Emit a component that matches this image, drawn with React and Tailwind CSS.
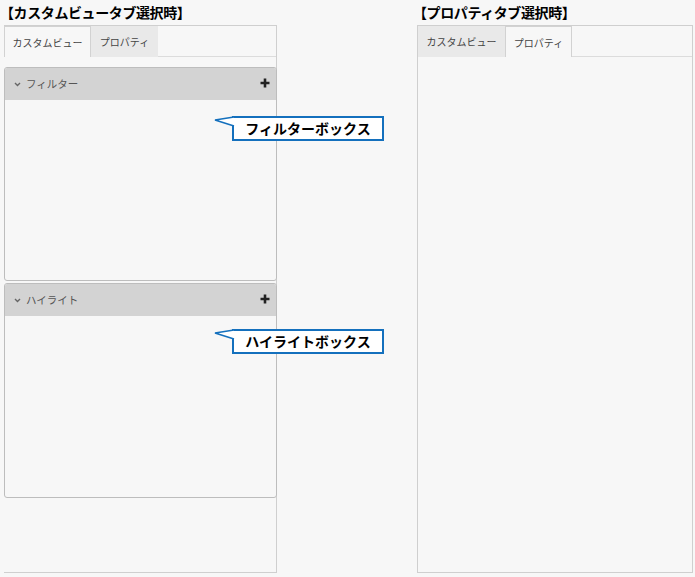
const Tab = ({ label, active, w }) => (
  <div
    className={`${w} h-[31px] flex items-center justify-center text-[10px] text-[#444] ${
      active ? 'bg-[#f7f7f7] border-l border-t border-r border-[#d2d2d2]' : 'bg-[#e9e9e9]'
    }`}
  >
    {label}
  </div>
);

const Box = ({ title, h }) => (
  <div className={`${h} border border-[#bdbdbd] rounded-[3px] bg-[#f7f7f7] flex flex-col overflow-hidden`}>
    <div className="h-[32px] bg-[#d3d3d3] flex items-center pl-[9px] pr-[6px]">
      <svg width="7" height="5" viewBox="0 0 7 5" className="mr-[5px] mt-[1px]">
        <path d="M1 1 L3.5 3.5 L6 1" fill="none" stroke="#666" strokeWidth="1.4" />
      </svg>
      <span className="text-[10.5px] text-[#555]">{title}</span>
      <svg width="10" height="10" viewBox="0 0 10 10" className="ml-auto mb-[2px]">
        <path d="M5 0.5 V9.5 M0.5 5 H9.5" stroke="#222" strokeWidth="2.6" />
      </svg>
    </div>
  </div>
);

const Callout = ({ label, top }) => (
  <div className="absolute left-[214px]" style={{ top }}>
    <div className="relative">
      <div className="absolute left-[18px] top-0 w-[152px] h-[25px] border-2 border-[#1470bd] bg-white flex items-center justify-center text-[14px] font-bold text-black">
        {label}
      </div>
      <svg width="24" height="14" viewBox="0 0 24 14" className="absolute left-0 top-0">
        <polygon points="1,4 20,1 20,10" fill="white" />
        <path d="M20 1 L1 4 L20 10" fill="none" stroke="#1470bd" strokeWidth="1.6" />
      </svg>
    </div>
  </div>
);

const Panel = ({ activeFirst, boxes, w, noLeft }) => (
  <div
    className={`${w} h-[548px] border-t border-r border-b ${noLeft ? '' : 'border-l'} border-[#cfcfcf] flex flex-col`}
  >
    <div className="flex">
      <Tab label="カスタムビュー" active={activeFirst} w="w-[87px]" />
      <Tab label="プロパティ" active={!activeFirst} w="w-[67px]" />
      <div className="flex-1 border-b border-[#dcdcdc]" />
    </div>
    {boxes && (
      <div className="mt-[10px] flex flex-col gap-[2px] -mr-px">
        <Box title="フィルター" h="h-[214px]" />
        <Box title="ハイライト" h="h-[215px]" />
      </div>
    )}
  </div>
);

export default function App() {
  return (
    <div
      className="relative w-[695px] h-[577px] bg-[#f7f7f7] flex"
      style={{ fontFamily: '"Noto Sans CJK JP", "Noto Sans", sans-serif' }}
    >
      <div className="w-[413px] flex flex-col">
        <div className="h-[25px] pt-[2px] text-[14px] leading-[20px] font-bold text-black tracking-[-0.4px]">
          【カスタムビュータブ選択時】
        </div>
        <div className="pl-[4px]">
          <Panel activeFirst boxes w="w-[273px]" noLeft />
        </div>
      </div>
      <div className="flex flex-col">
        <div className="h-[25px] pt-[2px] text-[14px] leading-[20px] font-bold text-black tracking-[-0.4px]">
          【プロパティタブ選択時】
        </div>
        <div className="pl-[4px]">
          <Panel activeFirst={false} w="w-[276px]" />
        </div>
      </div>
      <Callout label="フィルターボックス" top={116} />
      <Callout label="ハイライトボックス" top={329} />
    </div>
  );
}
